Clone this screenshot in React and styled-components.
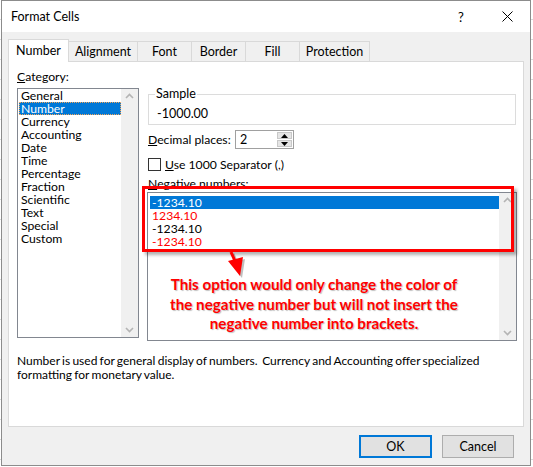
import React from "react";
import styled, { createGlobalStyle } from "styled-components";

const UI_FONT = `"Segoe UI", "Lato", "Noto Sans", sans-serif`;
const BLUE = "#0078d7";
const RED = "#ff0000";

const GlobalStyle = createGlobalStyle`
  * { box-sizing: border-box; }
  html, body { margin: 0; padding: 0; }
  body {
    width: 533px;
    height: 467px;
    overflow: hidden;
    background: #fff repeating-linear-gradient(to bottom, transparent 0 19px, #dadada 19px 20px);
    font-family: ${UI_FONT};
  }
`;

const Dialog = styled.div`
  margin-left: 1px;
  width: 530px;
  height: 466px;
  border: 1px solid #8c8c8c;
  background: #f0f0f0;
  display: flex;
  flex-direction: column;
  font-size: 12.2px;
  color: #000;
`;

const TitleBar = styled.div`
  height: 31px;
  flex: none;
  background: #fff;
  display: flex;
  align-items: center;
  padding-left: 9px;
`;

const Title = styled.div`
  flex: 1;
  font-size: 12.5px;
`;

const CaptionButton = styled.div`
  width: 46px;
  height: 31px;
  display: flex;
  align-items: center;
  justify-content: center;
  font-size: 13px;
  color: #000;
`;

const Body = styled.div`
  flex: 1;
  padding: 7px 6px 0 6px;
  display: flex;
  flex-direction: column;
`;

const TabRow = styled.div`
  height: 22px;
  display: flex;
  align-items: flex-end;
  position: relative;
  z-index: 1;
`;

const Tab = styled.div`
  width: ${({ w }) => w}px;
  height: ${({ active }) => (active ? 23 : 20)}px;
  margin-right: -1px;
  margin-bottom: ${({ active }) => (active ? -1 : 0)}px;
  border: 1px solid #d9d9d9;
  border-bottom: none;
  background: ${({ active }) => (active ? "#fff" : "#f0f0f0")};
  display: flex;
  align-items: center;
  justify-content: center;
  font-size: 12.5px;
  padding-bottom: ${({ active }) => (active ? 2 : 0)}px;
  position: relative;
  z-index: ${({ active }) => (active ? 2 : 1)};
`;

const Panel = styled.div`
  height: 366px;
  background: #fff;
  border: 1px solid #d9d9d9;
  padding: 8px 8px 0 8px;
  display: flex;
  flex-direction: column;
`;

const MainRow = styled.div`
  display: flex;
  gap: 9px;
`;

const LeftCol = styled.div`
  width: 122px;
  flex: none;
`;

const RightCol = styled.div`
  width: 369px;
  flex: none;
  position: relative;
`;

const Label = styled.div`
  line-height: 14px;
  height: 14px;
  margin-top: ${({ mt }) => mt || 0}px;
  white-space: nowrap;
`;

const Key = styled.span`
  text-decoration: underline;
`;

const ListBox = styled.div`
  width: ${({ w }) => w}px;
  height: ${({ h }) => h}px;
  margin-top: ${({ mt }) => mt || 0}px;
  margin-left: ${({ ml }) => ml || 0}px;
  border: 1px solid #828790;
  background: #fff;
  display: flex;
`;

const Items = styled.div`
  flex: 1;
  padding: ${({ pad }) => pad || "0 0 0 1px"};
`;

const Item = styled.div`
  height: 13px;
  line-height: 13px;
  padding-left: 2px;
  white-space: nowrap;
  color: ${({ selected, red }) => (selected ? "#fff" : red ? RED : "#000")};
  background: ${({ selected }) => (selected ? BLUE : "transparent")};
  border: 1px dotted ${({ focus }) => (focus ? "#f3a65a" : "transparent")};
  border-width: ${({ focus }) => (focus ? 1 : 0)}px;
  ${({ focus }) => focus && "line-height: 11px; padding-left: 1px;"}
`;

const ScrollBar = styled.div`
  width: 17px;
  flex: none;
  background: #f0f0f0;
  display: flex;
  flex-direction: column;
  justify-content: space-between;
  align-items: center;
  padding: 4px 0;
`;

const Chevron = ({ down }) => (
  <svg width="9" height="6" viewBox="0 0 9 6">
    <path
      d={down ? "M1 1 L4.5 4.5 L8 1" : "M1 5 L4.5 1.5 L8 5"}
      fill="none"
      stroke="#b4b4b4"
      strokeWidth="1.6"
    />
  </svg>
);

const Fieldset = styled.fieldset`
  margin: 17px 0 0 0;
  width: 368px;
  height: 38px;
  border: 1px solid #dcdcdc;
  padding: 6px 8px 0 8px;
  legend {
    padding: 0 1px;
    margin-left: -2px;
    line-height: 14px;
    font-size: 12.5px;
  }
`;

const SampleValue = styled.div`
  line-height: 14px;
  font-size: 12.5px;
`;

const Row = styled.div`
  display: flex;
  align-items: center;
  height: ${({ h }) => h}px;
  margin-top: ${({ mt }) => mt}px;
  white-space: nowrap;
`;

const RowLabel = styled.div`
  width: 87px;
  flex: none;
`;

const Spin = styled.div`
  width: 59px;
  height: 19px;
  border: 1px solid #a0a0a0;
  display: flex;
  background: #fff;
`;

const SpinValue = styled.div`
  flex: 1;
  padding-left: 4px;
  line-height: 17px;
  font-size: 12.5px;
`;

const SpinButtons = styled.div`
  width: 16px;
  display: flex;
  flex-direction: column;
  gap: 1px;
  padding: 1px 1px 1px 0;
`;

const SpinButton = styled.div`
  flex: 1;
  background: #e5e5e5;
  border: 1px solid #c8c8c8;
  display: flex;
  align-items: center;
  justify-content: center;
`;

const Tri = ({ down }) => (
  <svg width="7" height="4" viewBox="0 0 7 4">
    <path d={down ? "M0 0 H7 L3.5 4 Z" : "M0 4 H7 L3.5 0 Z"} fill="#000" />
  </svg>
);

const CheckBox = styled.div`
  width: 13px;
  height: 13px;
  border: 1px solid #333;
  background: #fff;
  margin-right: 4px;
`;

const RedFrame = styled.div`
  position: absolute;
  left: -6px;
  top: 116px;
  width: 372px;
  height: 66px;
  border: 3px solid ${RED};
  box-shadow: 3px 3px 3px rgba(0, 0, 0, 0.3);
  pointer-events: none;
`;

const Arrow = styled.svg`
  position: absolute;
  left: 78px;
  top: 180px;
  overflow: visible;
`;

const Note = styled.div`
  position: absolute;
  left: 0;
  top: 205px;
  width: 332px;
  text-align: center;
  font-family: "Lato", "Liberation Sans", sans-serif;
  font-weight: 700;
  font-size: 15.2px;
  line-height: 19.5px;
  color: ${RED};
  text-shadow: 1px 1px 1px rgba(0, 0, 0, 0.25);
  white-space: nowrap;
`;

const Description = styled.div`
  margin-top: 13px;
  line-height: 14px;
  font-size: 12px;
  word-spacing: -0.8px;
  white-space: nowrap;
`;

const ButtonRow = styled.div`
  display: flex;
  justify-content: flex-end;
  gap: 10px;
  margin-top: 8px;
  padding-right: 10px;
`;

const Button = styled.div`
  width: ${({ primary }) => (primary ? 73 : 72)}px;
  height: 23px;
  background: #e1e1e1;
  border: ${({ primary }) => (primary ? `2px solid ${BLUE}` : "1px solid #adadad")};
  display: flex;
  align-items: center;
  justify-content: center;
  font-size: 12.5px;
`;

const tabs = [
  { name: "Number", w: 61 },
  { name: "Alignment", w: 70 },
  { name: "Font", w: 55 },
  { name: "Border", w: 55 },
  { name: "Fill", w: 55 },
  { name: "Protection", w: 71 },
];

const categories = [
  "General",
  "Number",
  "Currency",
  "Accounting",
  "Date",
  "Time",
  "Percentage",
  "Fraction",
  "Scientific",
  "Text",
  "Special",
  "Custom",
];

const negatives = [
  { text: "-1234.10", red: false },
  { text: "1234.10", red: true },
  { text: "-1234.10", red: false },
  { text: "-1234.10", red: true },
];

export default function App() {
  return (
    <>
      <GlobalStyle />
      <Dialog>
        <TitleBar>
          <Title>Format Cells</Title>
          <CaptionButton>?</CaptionButton>
          <CaptionButton>
            <svg width="11" height="11" viewBox="0 0 11 11">
              <path d="M0.5 0.5 L10.5 10.5 M10.5 0.5 L0.5 10.5" stroke="#000" strokeWidth="1" />
            </svg>
          </CaptionButton>
        </TitleBar>
        <Body>
          <TabRow>
            {tabs.map((t, i) => (
              <Tab key={t.name} w={t.w} active={i === 0}>
                {t.name}
              </Tab>
            ))}
          </TabRow>
          <Panel>
            <MainRow>
              <LeftCol>
                <Label>
                  <Key>C</Key>ategory:
                </Label>
                <ListBox w={122} h={250} mt={4}>
                  <Items>
                    {categories.map((c) => (
                      <Item key={c} selected={c === "Number"} focus={c === "Number"}>
                        {c}
                      </Item>
                    ))}
                  </Items>
                  <ScrollBar>
                    <Chevron />
                    <Chevron down />
                  </ScrollBar>
                </ListBox>
              </LeftCol>
              <RightCol>
                <Fieldset>
                  <legend>Sample</legend>
                  <SampleValue>-1000.00</SampleValue>
                </Fieldset>
                <Row h={19} mt={5}>
                  <RowLabel>
                    <Key>D</Key>ecimal places:
                  </RowLabel>
                  <Spin>
                    <SpinValue>2</SpinValue>
                    <SpinButtons>
                      <SpinButton>
                        <Tri />
                      </SpinButton>
                      <SpinButton>
                        <Tri down />
                      </SpinButton>
                    </SpinButtons>
                  </Spin>
                </Row>
                <Row h={13} mt={9}>
                  <CheckBox />
                  <span>
                    <Key>U</Key>se 1000 Separator (,)
                  </span>
                </Row>
                <Label mt={6}>
                  <Key>N</Key>egative numbers:
                </Label>
                <ListBox w={370} h={149} mt={1} ml={-1}>
                  <Items pad="3px 0 0 2px">
                    {negatives.map((n, i) => (
                      <Item key={i} selected={i === 0} red={n.red}>
                        {n.text}
                      </Item>
                    ))}
                  </Items>
                  <ScrollBar>
                    <Chevron />
                    <Chevron down />
                  </ScrollBar>
                </ListBox>
                <RedFrame />
                <Arrow width="22" height="30" viewBox="0 0 22 30">
                  <g transform="translate(2 2)" fill="rgba(0,0,0,0.25)" stroke="rgba(0,0,0,0.25)">
                    <path d="M5 2 L9 11" strokeWidth="3" />
                    <path d="M2 11 L17 7 L14 26 Z" stroke="none" />
                  </g>
                  <g fill={RED} stroke={RED}>
                    <path d="M5 2 L9 11" strokeWidth="3" />
                    <path d="M2 11 L17 7 L14 26 Z" stroke="none" />
                  </g>
                </Arrow>
                <Note>
                  This option would only change the color of
                  <br />
                  the negative number but will not insert the
                  <br />
                  negative number into brackets.
                </Note>
              </RightCol>
            </MainRow>
            <Description>
              Number is used for general display of numbers.&nbsp; Currency and Accounting offer specialized
              <br />
              formatting for monetary value.
            </Description>
          </Panel>
          <ButtonRow>
            <Button primary>OK</Button>
            <Button>Cancel</Button>
          </ButtonRow>
        </Body>
      </Dialog>
    </>
  );
}
